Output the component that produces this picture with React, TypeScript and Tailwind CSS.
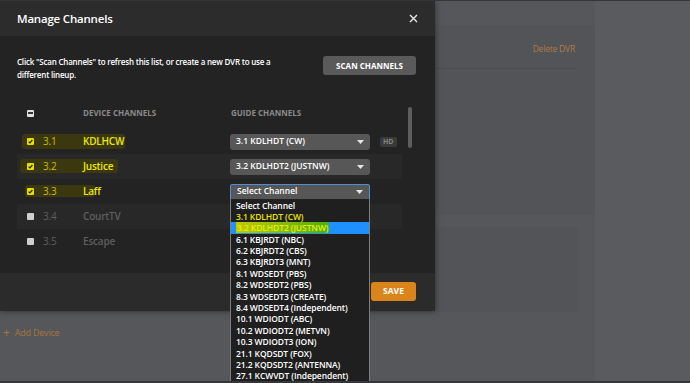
import React from 'react';

type Row = { num: string; name: string; checked: boolean; guide?: string; hd?: boolean; open?: boolean; mark?: string };

const rows: Row[] = [
  { num: '3.1', name: 'KDLHCW', checked: true, guide: '3.1 KDLHDT (CW)', hd: true, mark: 'left-[5px] w-[103px] top-[5px] h-[15px]' },
  { num: '3.2', name: 'Justice', checked: true, guide: '3.2 KDLHDT2 (JUSTNW)', mark: 'left-[3px] w-[98px] top-[5px] h-[14px]' },
  { num: '3.3', name: 'Laff', checked: true, guide: 'Select Channel', open: true, mark: 'left-[8px] w-[70px] top-[6px] h-[12px]' },
  { num: '3.4', name: 'CourtTV', checked: false },
  { num: '3.5', name: 'Escape', checked: false },
];

const options = [
  'Select Channel',
  '3.1 KDLHDT (CW)',
  '3.2 KDLHDT2 (JUSTNW)',
  '6.1 KBJRDT (NBC)',
  '6.2 KBJRDT2 (CBS)',
  '6.3 KBJRDT3 (MNT)',
  '8.1 WDSEDT (PBS)',
  '8.2 WDSEDT2 (PBS)',
  '8.3 WDSEDT3 (CREATE)',
  '8.4 WDSEDT4 (Independent)',
  '10.1 WDIODT (ABC)',
  '10.2 WDIODT2 (METVN)',
  '10.3 WDIODT3 (ION)',
  '21.1 KQDSDT (FOX)',
  '21.2 KQDSDT2 (ANTENNA)',
  '27.1 KCWVDT (Independent)',
];

const Caret = () => (
  <svg width="7" height="4" viewBox="0 0 7 4" className="shrink-0">
    <path d="M0 0h7L3.5 4z" fill="#e6e6e6" />
  </svg>
);

const Checkbox: React.FC<{ checked: boolean }> = ({ checked }) =>
  checked ? (
    <span className="relative w-[7px] h-[7px] rounded-[1px] bg-[#e4e000] flex items-center justify-center">
      <svg width="5" height="5" viewBox="0 0 5 5">
        <path d="M0.6 2.6l1.3 1.3L4.4 1" stroke="#222" strokeWidth="1.2" fill="none" />
      </svg>
    </span>
  ) : (
    <span className="w-[7px] h-[7px] rounded-[1px] bg-[#cfcfcf]" />
  );

const ChannelRow: React.FC<{ row: Row; alt: boolean }> = ({ row, alt }) => (
  <div className={`relative h-[25px] flex items-center ${alt ? 'bg-[#282828]' : ''}`}>
    {/* yellow marker the screenshot was annotated with */}
    {row.mark && <span className={`absolute rounded-[3px] bg-[#3b3810] ${row.mark}`} />}
    <div className="relative w-[66px] flex items-center pl-[10px] gap-[9px]">
      <Checkbox checked={row.checked} />
      <span className={`text-[10px] tracking-[-0.2px] ${row.checked ? 'text-[#c9bf00]' : 'text-[#5e5e5e]'}`}>{row.num}</span>
    </div>
    <div
      className={`relative w-[147px] text-[10px] tracking-[-0.2px] font-semibold ${
        row.checked ? 'text-[#ecea00]' : 'text-[#5e5e5e]'
      }`}
    >
      {row.name}
    </div>
    {row.guide && (
      <div className="relative flex items-center gap-[10px]">
        <div
          className={`w-[140px] h-[16px] flex items-center justify-between px-[6px] text-[8.5px] font-semibold text-white bg-[#575757] ${
            row.open ? 'border border-[#4a8fdc] rounded-t-[2px] px-[5px]' : 'rounded-[3px]'
          }`}
        >
          <span>{row.guide}</span>
          <Caret />
        </div>
        {row.hd && (
          <span className="h-[10px] px-[3px] rounded-[2px] bg-[#3a3a3a] text-[7px] font-bold text-[#858585] leading-[10px]">HD</span>
        )}
        {row.open && (
          <div className="absolute left-0 top-[15px] w-[140px] bg-[#1f1f1f] border-x border-[#7d7d7d] pt-[1px] z-10">
            {options.map((o, i) => (
              <div
                key={o}
                className={`h-[11.4px] leading-[11.4px] px-[5px] text-[8.5px] tracking-[-0.1px] font-semibold whitespace-nowrap ${
                  i === 2 ? 'bg-[#1e90ff]' : ''
                } ${i === 1 ? 'text-[#e8e600]' : i === 2 ? 'text-[#e6f000]' : 'text-white'}`}
              >
                {i === 2 ? <span className="bg-[linear-gradient(90deg,#c2c800,#4caf14)] px-[1px]">{o}</span> : o}
              </div>
            ))}
          </div>
        )}
      </div>
    )}
  </div>
);

export default function App() {
  return (
    <div
      className="relative w-[690px] h-[383px] overflow-hidden bg-[#55575a] border-t border-b-2 border-[#34363a]"
      style={{ fontFamily: '"Open Sans", "Liberation Sans", sans-serif' }}
    >
      {/* page behind the dialog */}
      <div className="flex h-full">
        <div className="w-[595px] flex flex-col pt-[24px] pl-[2px]">
          <div className="h-[190px] bg-[#525457] flex flex-col items-end pr-[18px]">
            <div className="pt-[18px] pr-[2px] text-[8.5px] tracking-[-0.2px] text-[#b07a45]">Delete DVR</div>
            <div className="mt-[12px] w-[440px] h-px bg-[#4b4d50]" />
          </div>
          <div className="mt-[12px] h-[85px] bg-[#525457] w-[576px]" />
          <div className="mt-[14px] flex items-center gap-[5px] pl-[1px] text-[9px] tracking-[-0.2px] text-[#a9743e]">
            <span className="text-[12px] leading-none">+</span>
            <span>Add Device</span>
          </div>
        </div>
        <div className="flex-1 bg-[#595b5e]" />
      </div>

      {/* dialog */}
      <div className="absolute left-0 top-0 w-[435px] h-[310px] flex flex-col bg-[#232323] shadow-[0_0_6px_rgba(0,0,0,0.5)]">
        <div className="h-[35px] shrink-0 bg-[#2c2c2c] flex items-center justify-between pl-[17px] pr-[17px]">
          <span className="text-[11.5px] tracking-[-0.2px] font-semibold text-white">Manage Channels</span>
          <svg width="9" height="9" viewBox="0 0 9 9">
            <path d="M1 1l7 7M8 1L1 8" stroke="#e8e8e8" strokeWidth="1.4" />
          </svg>
        </div>

        <div className="flex-1 flex flex-col pl-[17px] pr-[19px] pt-[19px]">
          <div className="flex items-start justify-between">
            <p className="w-[265px] text-[8px] tracking-[-0.2px] leading-[13px] font-semibold text-white">
              Click "Scan Channels" to refresh this list, or create a new DVR to use a different lineup.
            </p>
            <button className="mt-[1px] w-[93px] h-[19px] rounded-[3px] bg-[#5a5a5a] text-[8px] font-bold text-white">
              SCAN CHANNELS
            </button>
          </div>

          <div className="mt-[24px] flex">
            <div className="flex-1">
              <div className="h-[16px] flex items-center text-[8px] font-bold text-[#8a8a8a]">
                <div className="w-[66px] pl-[10px]">
                  <span className="w-[7px] h-[7px] rounded-[1px] bg-[#e0e0e0] flex items-center justify-center">
                    <span className="w-[5px] h-[1.5px] bg-[#333]" />
                  </span>
                </div>
                <div className="w-[148px]">DEVICE CHANNELS</div>
                <div>GUIDE CHANNELS</div>
              </div>
              <div className="mt-[8px]">
                {rows.map((r, i) => (
                  <ChannelRow key={r.num} row={r} alt={i % 2 === 1} />
                ))}
              </div>
            </div>
            <div className="w-[14px] pl-[6px]">
              <div className="mt-[2px] w-[4px] h-[41px] rounded-full bg-[#5e5e5e]" />
            </div>
          </div>
        </div>

        <div className="h-[38px] shrink-0 bg-[#2b2b2b] flex items-start justify-end pr-[19px] pt-[9px]">
          <button className="w-[45px] h-[19px] rounded-[3px] bg-[#d9851b] text-[8.5px] font-bold text-white">SAVE</button>
        </div>
      </div>
    </div>
  );
}
